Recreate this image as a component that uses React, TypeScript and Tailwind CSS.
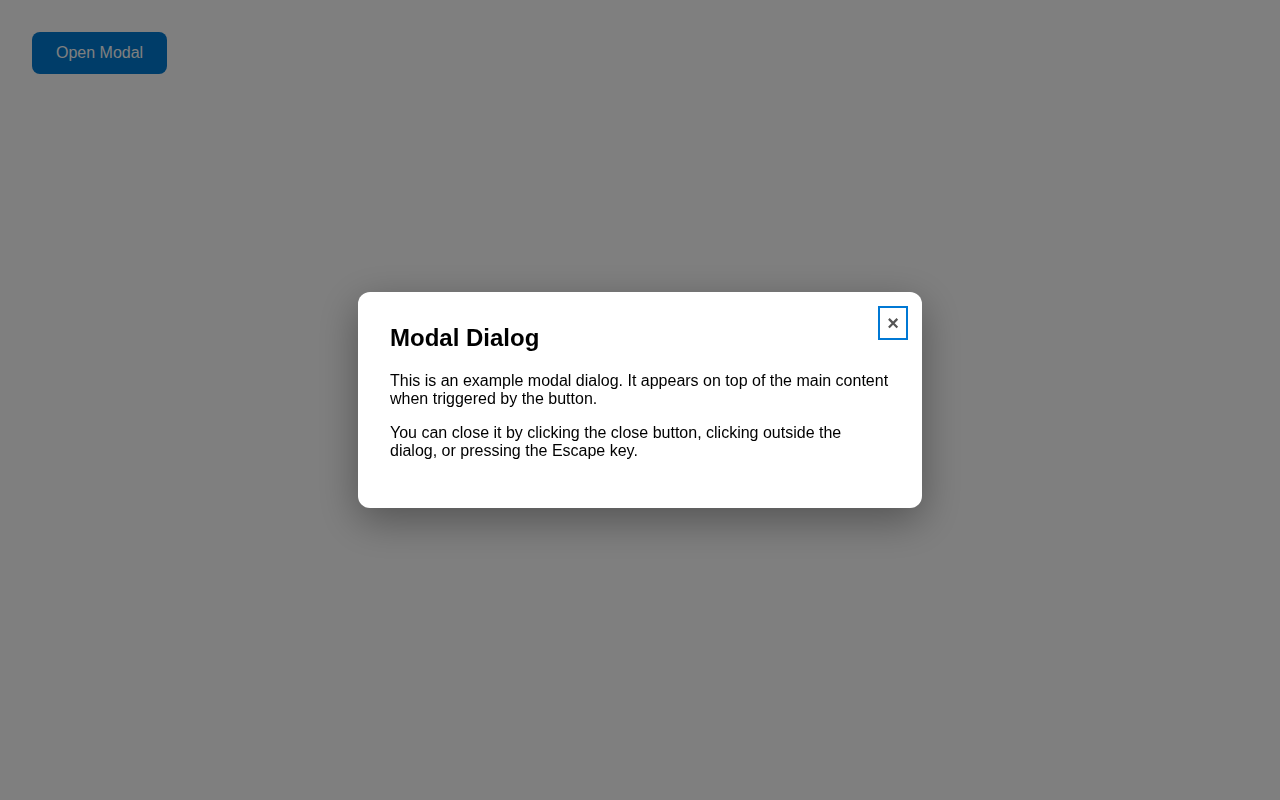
export default function App() {
  return (
    <div className="min-h-screen bg-white p-8 font-['Liberation_Sans',Arial,sans-serif]">
      <button className="rounded-lg bg-[#007ad2] px-6 py-3 text-base leading-[18px] text-white">
        Open Modal
      </button>

      {/* overlay */}
      <div className="fixed inset-0 flex items-center justify-center bg-black/50">
        <div className="relative w-[564px] rounded-xl bg-white p-8 text-black shadow-[0_12px_40px_rgba(0,0,0,0.35)]">
          <button className="absolute right-[14px] top-[14px] flex h-[34px] w-[30px] items-center justify-center border-2 border-[#0078d4] text-[20px] font-bold leading-none text-[#555]">
            ×
          </button>
          <h2 className="mb-5 text-2xl font-bold leading-[28px]">Modal Dialog</h2>
          <p className="mb-4 text-base leading-[18px]">
            This is an example modal dialog. It appears on top of the main content when triggered by the button.
          </p>
          <p className="mb-4 text-base leading-[18px]">
            You can close it by clicking the close button, clicking outside the dialog, or pressing the Escape key.
          </p>
        </div>
      </div>
    </div>
  )
}
